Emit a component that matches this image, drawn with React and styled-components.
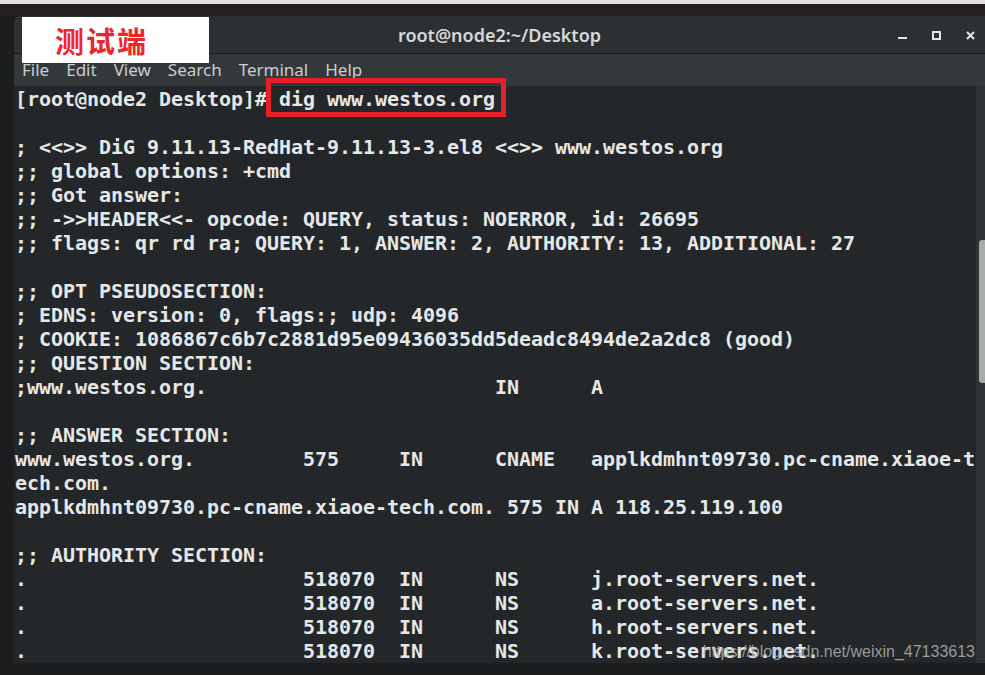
import styled, { createGlobalStyle } from "styled-components";

const GlobalStyle = createGlobalStyle`
  html, body { margin: 0; padding: 0; background: #1c1d1f; }
  * { box-sizing: border-box; }
`;

const Page = styled.div`
  width: 985px;
  height: 675px;
  overflow: hidden;
  position: relative;
  display: flex;
  flex-direction: column;
  background: #1c1d1f;
`;

const TopStrip = styled.div`
  height: 4px;
  background: #e4e0e0;
`;

const Desk = styled.div`
  height: 12px;
  background: #241f21;
`;

const Window = styled.div`
  margin-left: 14px;
  width: 971px;
  display: flex;
  flex-direction: column;
  border-top-left-radius: 6px;
  overflow: hidden;
`;

const TitleBar = styled.div`
  height: 38px;
  background: #2c3033;
  border-bottom: 1px solid #1a1c1d;
  display: flex;
  align-items: center;
  justify-content: center;
  position: relative;
`;

const Title = styled.div`
  font-family: "Noto Sans", "Open Sans", sans-serif;
  font-size: 18px;
  font-weight: 600;
  color: #d6d8d9;
`;

const Controls = styled.div`
  position: absolute;
  right: -2px;
  top: 14px;
  display: flex;
  align-items: center;
`;

const CtrlBtn = styled.div`
  width: 34px;
  height: 10px;
  display: flex;
  align-items: center;
  justify-content: center;
  svg { display: block; }
`;

const MenuBar = styled.div`
  height: 32px;
  background: #33383b;
  display: flex;
  align-items: center;
  padding-left: 8px;
`;

const MenuItem = styled.span`
  font-family: "Noto Sans", "Open Sans", sans-serif;
  font-size: 17px;
  color: #cbcdce;
  margin-right: 17px;
  margin-top: -2px;
`;

const Terminal = styled.div`
  height: 577px;
  background: #232729;
  display: flex;
  position: relative;
`;

const Screen = styled.div`
  width: 962px;
  padding: 1px 0 0 1px;
  font-family: "DejaVu Sans Mono", "Liberation Mono", monospace;
  font-weight: bold;
  font-size: 20px;
  letter-spacing: -0.04px;
  color: #e6e7e7;
`;

const Line = styled.div`
  height: 24px;
  line-height: 24px;
  white-space: pre;
`;

const Boxed = styled.span`
  position: relative;
  &::after {
    content: "";
    position: absolute;
    top: -9px;
    bottom: -6px;
    left: -13px;
    right: -11px;
    border: 5px solid #e5202a;
  }
`;

const Track = styled.div`
  width: 9px;
  background: #2d3235;
  padding-top: 154px;
  padding-left: 3px;
`;

const Thumb = styled.div`
  height: 143px;
  width: 8px;
  background: #a9aaaa;
  border-radius: 3px;
`;

const BottomStrip = styled.div`
  height: 12px;
  background: #1c1d1f;
`;

const Label = styled.div`
  position: absolute;
  left: 22px;
  top: 17px;
  width: 187px;
  height: 46px;
  background: #ffffff;
  padding-left: 33px;
  display: flex;
  align-items: center;
  font-family: "Noto Sans CJK SC", sans-serif;
  font-weight: bold;
  font-size: 29px;
  color: #ec262c;
  letter-spacing: 2px;
`;

const Watermark = styled.div`
  position: absolute;
  right: 10px;
  bottom: 2px;
  font-family: "Liberation Sans", Arial, sans-serif;
  font-size: 16px;
  color: rgba(175, 178, 180, 0.85);
`;

const pad = (...parts) => {
  let s = "";
  for (const [text, col] of parts) {
    s += text;
    if (col) s = s.padEnd(col, " ");
  }
  return s;
};

const lines = [
  "",
  "; <<>> DiG 9.11.13-RedHat-9.11.13-3.el8 <<>> www.westos.org",
  ";; global options: +cmd",
  ";; Got answer:",
  ";; ->>HEADER<<- opcode: QUERY, status: NOERROR, id: 26695",
  ";; flags: qr rd ra; QUERY: 1, ANSWER: 2, AUTHORITY: 13, ADDITIONAL: 27",
  "",
  ";; OPT PSEUDOSECTION:",
  "; EDNS: version: 0, flags:; udp: 4096",
  "; COOKIE: 1086867c6b7c2881d95e09436035dd5deadc8494de2a2dc8 (good)",
  ";; QUESTION SECTION:",
  pad([";www.westos.org.", 40], ["IN", 48], ["A"]),
  "",
  ";; ANSWER SECTION:",
  pad(["www.westos.org.", 24], ["575", 32], ["IN", 40], ["CNAME", 48], ["applkdmhnt09730.pc-cname.xiaoe-t"]),
  "ech.com.",
  "applkdmhnt09730.pc-cname.xiaoe-tech.com. 575 IN A 118.25.119.100",
  "",
  ";; AUTHORITY SECTION:",
  ...["j", "a", "h", "k"].map((l) =>
    pad([".", 24], ["518070", 32], ["IN", 40], ["NS", 48], [`${l}.root-servers.net.`])
  ),
];

const menus = ["File", "Edit", "View", "Search", "Terminal", "Help"];

export default function App() {
  return (
    <>
      <GlobalStyle />
      <Page>
        <TopStrip />
        <Desk />
        <Window>
          <TitleBar>
            <Title>root@node2:~/Desktop</Title>
            <Controls>
              <CtrlBtn>
                <svg width="9" height="10" viewBox="0 0 9 10">
                  <rect x="0" y="7" width="9" height="2" fill="#e6e6e6" />
                </svg>
              </CtrlBtn>
              <CtrlBtn>
                <svg width="9" height="9" viewBox="0 0 9 9">
                  <rect x="1" y="1" width="7" height="7" fill="none" stroke="#e6e6e6" strokeWidth="2" />
                </svg>
              </CtrlBtn>
              <CtrlBtn>
                <svg width="9" height="9" viewBox="0 0 9 9">
                  <path d="M1 1 L8 8 M8 1 L1 8" stroke="#e6e6e6" strokeWidth="2" />
                </svg>
              </CtrlBtn>
            </Controls>
          </TitleBar>
          <MenuBar>
            {menus.map((m) => (
              <MenuItem key={m}>{m}</MenuItem>
            ))}
          </MenuBar>
          <Terminal>
            <Screen>
              <Line>
                {"[root@node2 Desktop]# "}
                <Boxed>dig www.westos.org</Boxed>
              </Line>
              {lines.map((l, i) => (
                <Line key={i}>{l}</Line>
              ))}
            </Screen>
            <Track>
              <Thumb />
            </Track>
            <Watermark>https://blog.csdn.net/weixin_47133613</Watermark>
          </Terminal>
        </Window>
        <BottomStrip />
        <Label>测试端</Label>
      </Page>
    </>
  );
}
